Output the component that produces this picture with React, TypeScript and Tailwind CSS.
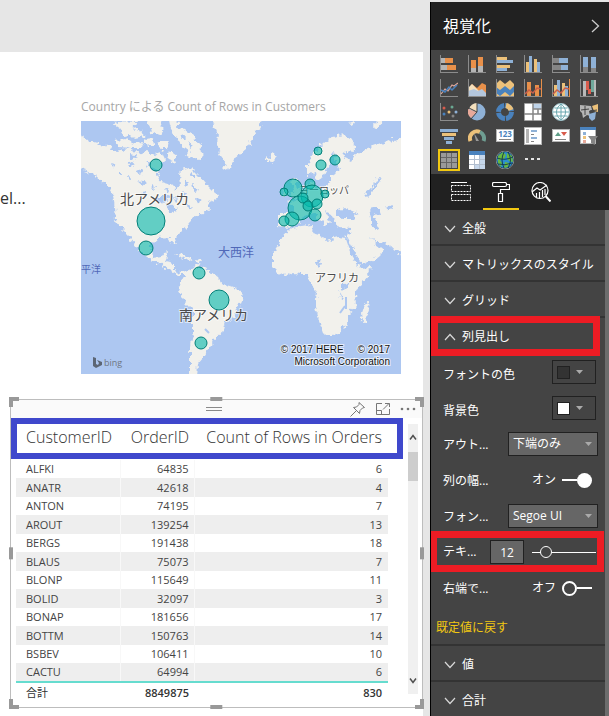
import React, { useState } from "react";

const LATIN = "font-['Open_Sans','Noto_Sans_CJK_JP',sans-serif]";

const ORDERS: [string, number, number][] = [
  ["ALFKI", 64835, 6],
  ["ANATR", 42618, 4],
  ["ANTON", 74195, 7],
  ["AROUT", 139254, 13],
  ["BERGS", 191438, 18],
  ["BLAUS", 75073, 7],
  ["BLONP", 115649, 11],
  ["BOLID", 32097, 3],
  ["BONAP", 181656, 17],
  ["BOTTM", 150763, 14],
  ["BSBEV", 106411, 10],
  ["CACTU", 64994, 6],
];

const BUBBLES: [number, number, number][] = [
  [75, 44, 6], [70, 100, 14], [65, 127, 7], [118, 152, 6], [138, 179, 10], [120, 222, 6],
  [237, 30, 4], [254, 39, 5], [240, 44, 5], [212, 67, 9], [203, 71, 4], [229, 63, 5],
  [231, 75, 11], [219, 87, 12], [244, 73, 4], [222, 77, 5], [227, 85, 5], [236, 83, 5],
  [234, 94, 6], [211, 98, 7], [203, 100, 5],
];

/* ---------- Map visual ---------- */

function MapVisual() {
  return (
    <section className="w-[320px] shrink-0">
      <h2 className="h-[22px] whitespace-nowrap text-[12px] leading-[16px] text-[#a6a6a6]">
        Country による Count of Rows in Customers
      </h2>
      <svg viewBox="0 0 320 253" className="block h-[253px] w-full" role="img" aria-label="Customers by country">
        <defs>
          <filter id="coast" x="-5%" y="-5%" width="110%" height="110%">
            <feTurbulence type="fractalNoise" baseFrequency="0.22" numOctaves="2" seed="4" result="n" />
            <feDisplacementMap in="SourceGraphic" in2="n" scale="8" xChannelSelector="R" yChannelSelector="G" />
          </filter>
          <clipPath id="frame"><rect width="320" height="253" /></clipPath>
        </defs>
        <rect width="320" height="253" fill="#adc7f1" />
        <g clipPath="url(#frame)">
          <g filter="url(#coast)" fill="#f2f1ec">
            <path d="M-6 12L10 20L24 24L36 30L48 27L58 33L66 30L74 34L80 30L84 38L80 44L76 54L80 60L90 63L95 69L99 64L98 55L101 48L109 46L116 53L126 64L134 72L137 78L127 82L128 88L121 92L112 97L109 101L104 107L97 114L93 118L95 124L91 122L88 116L78 117L72 120L69 128L73 137L80 136L83 132L88 131L84 140L93 142L93 149L100 152L107 150L111 153L105 154L98 154L86 147L77 142L66 137L59 131L53 122L46 113L40 107L35 99L34 87L32 74L27 66L14 54L6 50L-6 46Z" />
            <path d="M36 0L56 1L52 8L60 10L63 16L54 18L50 14L42 15L40 8L34 4Z" />
            <path d="M32 19L44 18L54 22L62 21L60 27L50 27L38 26Z" />
            <path d="M66 -3H82L78 5L84 9L78 14L70 11Z" />
            <path d="M64 18L72 17L73 25L66 25Z" />
            <path d="M76 20L88 20L86 28L80 28Z" />
            <path d="M88 -3L98 1L96 7L104 8L112 14L118 22L122 32L119 39L112 38L104 34L108 30L100 24L96 17L92 14L90 7Z" />
            <path d="M89 29L96 34L94 42L87 39Z" />
            <path d="M129 -4L134 5L137 13L136 24L141 37L146 49L151 46L154 37L164 29L170 20L177 10L184 -4Z" />
            <path d="M184 35L188 37L191 32L196 36L191 41L186 40Z" />
            <path d="M111 147L117 144L127 149L137 156L142 164L152 167L162 172L160 179L157 186L153 197L144 202L141 212L132 217L131 224L126 229L122 236L117 242L116 256H109L109 231L112 211L112 189L104 181L97 169L102 157L107 150Z" />
            <path d="M95 133L103 134L112 138L108 139L100 136ZM114 139L120 140L118 143Z" />
            <path d="M202 114L197 124L192 132L192 146L197 151L204 155L212 152L219 153L227 153L230 162L236 172L234 186L239 201L244 215L250 215L258 212L266 202L267 193L275 186L274 172L281 161L287 154L291 146L279 147L272 137L268 126L265 117L257 116L246 119L238 114L231 112L232 104L220 105L209 108Z" />
            <path d="M198 92L213 92L213 86L207 82L216 78L226 68L228 60L234 61L234 68L244 67L250 60L250 54L259 49L256 42L262 36L270 40L274 34L286 28L300 23L308 20L326 16V136L312 127L303 121L295 121L288 114L295 123L304 130L294 138L281 144L274 131L267 117L270 107L258 106L252 98L249 92L244 90L249 100L245 105L239 99L233 92L222 95L216 103L208 107L198 105Z" />
            <path d="M226 44L230 36L236 28L243 21L251 15L262 13L269 18L274 24L272 31L265 30L263 36L260 40L253 40L256 31L251 34L248 44L244 51L241 57L235 59L234 52L226 54Z" />
            <path d="M210 60L216 56L216 64L222 74L216 77L209 76L213 70ZM202 69L207 67L207 74L201 75Z" />
            <path d="M298 -4L302 0L295 8L293 4ZM268 2L274 0L272 4Z" />
            <path d="M287 180L283 186L281 192L282 201L285 200L288 190Z" />
          </g>
          <g filter="url(#coast)" fill="#adc7f1">
            <path d="M256 90L264 87L276 92L274 98L262 98L256 96ZM288 88L297 86L299 92L292 95L298 104L296 109L290 104L290 97ZM304 86L312 84L309 90Z" />
            <path d="M74 78L84 74L90 76L82 82ZM84 83L92 84L96 90L90 92L87 88Z" />
            <path d="M46 44L52 40L54 44L49 47ZM56 60L66 62L62 65ZM37 50L42 53L38 55ZM60 71L66 70L65 75Z" />
            <path d="M48 33L56 34L54 38L48 37ZM100 70L107 72L104 77ZM111 62L117 69L113 71ZM115 77L122 80L116 84Z" />
            <path d="M64 40L70 42L67 46ZM56 50L60 48L62 53L57 54ZM46 56L51 57L48 61ZM70 64L74 66L71 69ZM84 66L89 69L85 71ZM30 42L34 43L33 47ZM112 50L114 57L109 57ZM104 58L108 61L104 65ZM92 76L99 78L95 82ZM106 84L111 86L107 90ZM102 12L106 17L101 19ZM108 20L112 25L109 27Z" />
            <path d="M262 163L268 161L267 167L262 169ZM259 170L262 178L260 179ZM234 142L240 138L238 146Z" />
            <path d="M298 55L301 57L292 70L286 76L283 74L291 67Z" />
          </g>
          <path d="M20 18V22M70 47L76 50M262 32L268 36M265 176V188M259 192L264 185M124 208L128 212" fill="none" stroke="#adc7f1" strokeWidth="2" />
          <g fontFamily="'Noto Sans CJK JP', sans-serif" fill="#4b4b4b" stroke="#ffffff" strokeOpacity="0.6" strokeWidth="2" paintOrder="stroke">
            <text x="39" y="83" fontSize="14">北アメリカ</text>
            <text x="98" y="199" fontSize="14">南アメリカ</text>
            <text x="234" y="161" fontSize="11">アフリカ</text>
            <text x="218" y="73" fontSize="10">ヨーロッパ</text>
          </g>
          <g fontFamily="'Noto Sans CJK JP', sans-serif" fill="#5068b8">
            <text x="137" y="136" fontSize="12">大西洋</text>
            <text x="0" y="152" fontSize="10">平洋</text>
          </g>
          <g fill="#01b8aa" fillOpacity="0.6" stroke="#027f78" strokeWidth="1">
            {BUBBLES.map(([x, y, r]) => (
              <circle key={`${x}-${y}`} cx={x} cy={y} r={r} />
            ))}
          </g>
          <path d="M12 236L15 237V243L17 244L18 242L16 239L21 241V244L15 247L12 245Z" fill="#5c6675" />
          <text x="23" y="245" fontFamily="'Open Sans', sans-serif" fontSize="9" fill="#6d7683">bing</text>
          <g fontFamily="'Liberation Sans', Arial, sans-serif" fontSize="10" fill="#111111" stroke="#ffffff" strokeOpacity="0.7" strokeWidth="2" paintOrder="stroke" textAnchor="end">
            <text x="309" y="232">{"© 2017 HERE \u00a0\u00a0\u00a0 © 2017"}</text>
            <text x="309" y="244">Microsoft Corporation</text>
          </g>
        </g>
      </svg>
    </section>
  );
}

/* ---------- Table visual ---------- */

function SelectionHandles() {
  return (
    <svg className="pointer-events-none absolute -inset-px h-[calc(100%+2px)] w-[calc(100%+2px)] overflow-visible" aria-hidden="true">
      <g fill="#999999">
        <path d="M-1 -2H9V2H3V8H-1Z" />
        <rect x="48.5%" y="-2" width="12" height="4" />
        <rect x="-1" y="48%" width="4" height="12" />
        <svg x="100%" overflow="visible"><path d="M1 -2H-8V2H-3V8H1Z" /></svg>
        <svg x="100%" y="48%" overflow="visible"><rect x="-3" width="4" height="12" /></svg>
        <svg y="100%" overflow="visible"><path d="M-1 1H9V-3H3V-9H-1Z" /></svg>
        <svg x="48.5%" y="100%" overflow="visible"><rect y="-3" width="12" height="4" /></svg>
        <svg x="100%" y="100%" overflow="visible"><path d="M1 1H-8V-3H-3V-9H1Z" /></svg>
      </g>
    </svg>
  );
}

function TableVisual() {
  return (
    <section className="relative ml-[10px] border border-[#bdbdbd]">
      <div className="flex h-[18px] items-center bg-[#fafafa]">
        <span className="flex-1" />
        <span className="h-1 w-4 border-y border-[#8a8a8a]" />
        <div className="flex flex-1 items-center justify-end gap-[9px] pr-[6px]">
          <button aria-label="Pin visual">
            <svg width="17" height="17" viewBox="0 0 17 17" fill="none" stroke="#777777" strokeWidth="1">
              <path d="M10 1.5L15.500 6.500L13.500 7L11 9.500L10.500 12.500L4.500 6.500L7.500 6L10 3.500ZM7.500 9.500L1.500 15.500" />
            </svg>
          </button>
          <button aria-label="Focus mode">
            <svg width="16" height="14" viewBox="0 0 16 14" fill="none" stroke="#777777" strokeWidth="1">
              <path d="M7 1.500H1.500V12.500H14.500V7M1.500 8.500H6.500V12.500M8 7.500L14 1.500M10 1.500H14.500V5" />
            </svg>
          </button>
          <button aria-label="More options">
            <svg width="16" height="4" viewBox="0 0 16 4" fill="#777777">
              <circle cx="2" cy="2" r="1.300" /><circle cx="8" cy="2" r="1.300" /><circle cx="14" cy="2" r="1.300" />
            </svg>
          </button>
        </div>
      </div>
      <div className="flex justify-between pb-[5px] pl-[5px] pr-1">
        <table className="w-[372px] table-fixed border-collapse text-[11px] text-[#444444]">
          <colgroup>
            <col className="w-[104px]" />
            <col className="w-[74px]" />
            <col />
          </colgroup>
          <thead>
            <tr className="h-[42px] whitespace-nowrap text-[16px] leading-[20px] text-[#333333]">
              <th className="p-0 pb-1 pl-[10px] text-left font-light">CustomerID</th>
              <th className="p-0 pb-1 pr-[5px] text-right font-light">OrderID</th>
              <th className="p-0 pb-1 pr-[6px] text-right font-light">Count of Rows in Orders</th>
            </tr>
          </thead>
          <tbody className="leading-[16px]">
            {ORDERS.map(([id, order, count]) => (
              <tr key={id} className="h-[18px] even:h-[19px] even:bg-[#eeeeee]">
                <td className="border-r border-[#f8f8f8] p-0 pl-[10px]">{id}</td>
                <td className="border-r border-[#f8f8f8] p-0 pr-[5px] text-right">{order}</td>
                <td className="p-0 pr-[6px] text-right">{count}</td>
              </tr>
            ))}
          </tbody>
          <tfoot>
            <tr className="h-[20px] border-t-2 border-[#66dccf] font-semibold leading-[16px] text-[#333333]">
              <td className="p-0 pl-[10px] font-normal">合計</td>
              <td className="p-0 pr-[5px] text-right">8849875</td>
              <td className="p-0 pr-[6px] text-right">830</td>
            </tr>
          </tfoot>
        </table>
        <div className="mb-2 mt-[6px] flex w-[10px] flex-col items-center bg-[#f0f0f0]">
          <svg width="8" height="28" viewBox="0 0 8 28" fill="none" stroke="#505050" strokeWidth="1.500"><path d="M1 15.500L4 11.500L7 15.500" /></svg>
          <span className="h-[29px] w-full bg-[#cdcdcd]" />
          <span className="flex-1" />
          <svg width="8" height="28" viewBox="0 0 8 28" fill="none" stroke="#505050" strokeWidth="1.500"><path d="M1 12.500L4 16.500L7 12.500" /></svg>
        </div>
      </div>
      <span className="pointer-events-none absolute left-0 right-[19px] top-[18px] h-[41px] border-[6px] border-[#3f48cc]" />
      <SelectionHandles />
    </section>
  );
}

/* ---------- Visualization icons (18 x 18) ---------- */

const O = "#e8904a";
const Y = "#ecc17a";
const B = "#8fb1d6";
const D = "#4a82bd";
const G = "#b5b5b5";
const K = "#858585";
const AXIS = <path d="M0 0H1V17H18V18H0Z" fill="#8c8c8c" />;

function Bars({ list }: { list: [number, number, number, number, string][] }) {
  return (
    <>
      {AXIS}
      {list.map(([x, y, w, h, c], i) => (
        <rect key={i} x={x} y={y} width={w} height={h} fill={c} />
      ))}
    </>
  );
}

const ICONS: [string, React.ReactNode][] = [
  ["Stacked bar chart", <Bars list={[[1, 3, 4, 5, G], [5, 3, 8, 5, O], [1, 10, 6, 5, G], [7, 10, 9, 5, O]]} />],
  ["Stacked column chart", <Bars list={[[3, 5, 5, 8, O], [3, 13, 5, 4, G], [10, 2, 5, 9, O], [10, 11, 5, 6, G]]} />],
  ["Clustered bar chart", <Bars list={[[1, 2, 10, 3, Y], [1, 5, 16, 3, B], [1, 10, 13, 3, Y], [1, 13, 10, 3, B]]} />],
  ["Clustered column chart", <Bars list={[[2, 7, 3, 10, Y], [5, 1, 3, 16, B], [10, 4, 3, 13, Y], [13, 7, 3, 10, B]]} />],
  ["100% stacked bar chart", <Bars list={[[1, 3, 6, 5, K], [7, 3, 9, 5, B], [1, 10, 8, 5, K], [9, 10, 7, 5, B]]} />],
  ["100% stacked column chart", <Bars list={[[3, 2, 5, 10, B], [3, 12, 5, 5, K], [11, 2, 5, 11, B], [11, 13, 5, 4, K]]} />],

  ["Line chart", <>{AXIS}<path d="M1 15L5 10L8 12L12 6L14 7L18 4" fill="none" stroke="#e0a79a" strokeWidth="1.200" /><path d="M1 11L5 13L9 8L12 11L17 6" fill="none" stroke={D} strokeWidth="1.500" /></>],
  ["Area chart", <><path d="M0 10L4 5L9 9L14 4L18 6V17H0Z" fill={O} /><path d="M0 9L4 5L12 13L18 16V17H0Z" fill="#f3dfbd" /><path d="M0 12L6 10L10 12L14 10L18 14V17H0Z" fill="#b3c6dc" />{AXIS}</>],
  ["Stacked area chart", <><path d="M0 5L4 1L9 5L14 1L18 5V12H0Z" fill={Y} /><path d="M0 8L4 11L9 7L14 11L18 7V17H0Z" fill={D} /><path d="M0 14L4 17L9 13L14 17L18 13V17H0Z" fill={Y} />{AXIS}</>],
  ["Line and stacked column chart", <><Bars list={[[3, 3, 4, 14, O], [11, 6, 4, 11, O], [17, 0, 1, 18, O]]} /><path d="M1 15L5 11L9 14L13 9L17 10" fill="none" stroke="#c95f4b" strokeWidth="1.500" /></>],
  ["Line and clustered column chart", <><Bars list={[[2, 6, 3, 11, Y], [5, 1, 3, 16, B], [10, 4, 3, 13, Y], [13, 7, 3, 10, B], [17, 0, 1, 18, O]]} /><path d="M1 15L5 11L9 14L13 9L17 10" fill="none" stroke="#c95f4b" strokeWidth="1.500" /></>],
  ["Waterfall chart", <Bars list={[[3, 2, 3, 15, "#b9b9b9"], [6, 2, 3, 9, "#d85b4c"], [8, 10, 3, 5, "#d85b4c"], [11, 1, 3, 12, "#70a99c"], [14, 1, 2, 16, "#b9b9b9"]]} />],

  ["Scatter chart", <>{AXIS}<circle cx="4" cy="5" r="1.500" fill="#d85b4c" /><circle cx="12" cy="4" r="1.500" fill="#6aa892" /><circle cx="4" cy="11" r="1.500" fill={D} /><circle cx="9" cy="9" r="1.500" fill={Y} /><circle cx="16" cy="9" r="1.500" fill={B} /><circle cx="13" cy="13" r="1.500" fill={K} /></>],
  ["Pie chart", <><circle cx="9" cy="9" r="8.500" fill={B} /><path d="M9 9V0A9 9 0 0 0 1 6Z" fill="#f3dfbd" /><path d="M9 9L0 6A9 9 0 0 0 3 15Z" fill="#e8a99a" /><path d="M9 0V9L1 5M9 9L3 16" fill="none" stroke="#444444" /></>],
  ["Donut chart", <><circle cx="9" cy="9" r="6.500" fill="none" stroke={D} strokeWidth="5" strokeDasharray="9 1" /><path d="M10 2.500A6.500 6.500 0 0 1 15 7" fill="none" stroke={Y} strokeWidth="5" /></>],
  ["Treemap", <><rect width="18" height="18" fill="#fff" /><path d="M9 1H17V6H9Z" fill="#bdd2e8" /><path d="M0 0H18V18H0ZM9 0V11M0 11H18M9 6H18M14 6V11M9 11V18" fill="none" stroke={K} strokeWidth="1.500" /></>],
  ["Map", <><circle cx="9" cy="9" r="8.500" fill="#fff" stroke="#9fc4cc" /><path d="M9 1V17M1 9H17M2.500 5H15.500M2.500 13H15.500M9 1C3 5 3 13 9 17M9 1C15 5 15 13 9 17" fill="none" stroke="#6aa8b0" /></>],
  ["Filled map", <><path d="M0 2L11 3L12 7L9 8L10 13L7 12L3 15L2 10L0 8Z" fill={G} /><path d="M12 3L18 1V9L14 8Z" fill={Y} /><path d="M9 11L16 9L15 16L12 18L9 15Z" fill={B} /><path d="M1 7L9 6M5 3V12M10 8L17 7" stroke="#444" fill="none" /></>],

  ["Funnel", <><rect y="2" width="18" height="3" fill={B} /><rect x="2" y="6" width="14" height="3" fill={Y} /><rect x="4" y="10" width="10" height="3" fill={B} /><rect x="6" y="14" width="6" height="3" fill={B} /></>],
  ["Gauge", <><path d="M2.500 14A7 7 0 0 1 12 5" fill="none" stroke={Y} strokeWidth="4" /><path d="M12 5A7 7 0 0 1 15.500 14" fill="none" stroke="#6f9e92" strokeWidth="4" /><path d="M11 14L6 6L8 14Z" fill="#999" /></>],
  ["Card", <><rect x=".5" y="2.500" width="17" height="12" fill="#fff" stroke={G} /><text x="9" y="10" fontSize="8" fontWeight="700" fontFamily="'Open Sans', sans-serif" textAnchor="middle" fill={D}>123</text><path d="M3 12.500H15" stroke={K} /></>],
  ["Multi-row card", <><rect x=".5" y=".5" width="17" height="17" fill="#fff" stroke={G} /><rect x="2" y="2" width="3" height="14" fill={G} /><path d="M7 3H13V5H7ZM7 10H13V12H7Z" fill={B} /><path d="M7 7.500H10M7 14.500H10" stroke={K} /></>],
  ["KPI", <><rect x=".5" y="2.500" width="17" height="12" fill="#fff" stroke={G} /><path d="M3 9L6 5L9 9Z" fill="#5f9e88" /><path d="M9 5H15L12 9Z" fill="#d85b4c" /><path d="M3 12.500H14" stroke={K} /></>],
  ["Slicer", <><rect x=".5" y=".5" width="15" height="16" fill="#fff" stroke={G} /><rect width="16" height="3" fill={D} /><rect x="3" y="5" width="3" height="3" fill={B} /><rect x="3" y="9" width="3" height="3" fill={Y} /><rect x="3" y="13" width="3" height="3" fill="#e8a99a" /><path d="M8 9H18L15 13V18L11 16V13Z" fill={K} /></>],

  ["Table", <><rect width="18" height="18" fill="#444" /><path d="M1 2H17V17H1Z" fill="#9a9a9a" /><path d="M1 6.500H17M1 11.500H17M6.500 2V17M11.500 2V17" stroke="#666" fill="none" /></>],
  ["Matrix", <><rect x="1" width="16" height="18" fill="#fff" /><rect x="1" width="16" height="4" fill={D} /><path d="M12 4H17V18H6V13H12Z" fill="#c6d7eb" /><path d="M1 8.500H17M1 13.500H17M6.500 4V18M11.500 4V18" stroke="#b3bfcf" fill="none" /></>],
  ["ArcGIS map", <><circle cx="9" cy="9" r="9" fill="#12384c" stroke="#aaa" strokeWidth=".7" /><circle cx="9" cy="9" r="8" fill="#2b8fd0" /><path d="M2 5L7 1L10 4L8 8L4 9L6 12L5 16L2 12ZM11 2L16 5L17 11L13 10L11 7ZM9 11L13 12L12 16L8 17Z" fill="#67b742" /><path d="M1 7Q9 10 17 6M2 13Q9 15 16 12M8 1Q4 9 8 17M12 1Q17 9 12 17" fill="none" stroke="#12384c" strokeWidth=".9" /></>],
  ["More visuals", <><rect y="7" width="3" height="2" fill="#e5e5e5" x="1" /><rect x="7" y="7" width="3" height="2" fill="#e5e5e5" /><rect x="13" y="7" width="3" height="2" fill="#e5e5e5" /></>],
];

/* ---------- Side pane ---------- */

function Chevron({ up = false }: { up?: boolean }) {
  return (
    <svg width="12" height="8" viewBox="0 0 12 8" fill="none" stroke="#d8d8d8" strokeWidth="1.200">
      <path d={up ? "M1 7L6 1.500L11 7" : "M1 1L6 6.500L11 1"} />
    </svg>
  );
}

function Section({ title, open = false, marked = false }: { title: string; open?: boolean; marked?: boolean }) {
  return (
    <div className="relative">
      <button
        aria-expanded={open}
        className={
          open
            ? "flex h-9 w-full items-center gap-[6px] whitespace-nowrap pl-[13px] pt-px text-[12px] text-white"
            : "flex h-9 w-full items-center gap-[6px] whitespace-nowrap border-b-2 border-[#333333] pl-[13px] pt-[3px] text-[12px] text-white"
        }
      >
        <Chevron up={open} />
        {title}
      </button>
      {marked && <span className="pointer-events-none absolute -top-[2px] left-0 right-[5px] h-[40px] border-[7px] border-[#ed1c24]" />}
    </div>
  );
}

function Caret() {
  return <svg width="7" height="4" viewBox="0 0 7 4" fill="#aaaaaa"><path d="M0 0H7L3.500 4Z" /></svg>;
}

function Row({ id, label, low = false, children }: { id: string; label: string; low?: boolean; children: React.ReactNode }) {
  return (
    <div className="flex h-9 items-center justify-between pl-3 pr-[7px] text-[12px] text-white">
      <label htmlFor={id} className={low ? "whitespace-nowrap pt-[6px]" : "whitespace-nowrap pt-px"}>{label}</label>
      {children}
    </div>
  );
}

function ColorButton({ id, white = false }: { id: string; white?: boolean }) {
  return (
    <button id={id} className="mr-[2px] flex h-6 w-11 items-center gap-[6px] border border-[#212121] pl-1">
      <span className={white ? "size-[13px] border border-[#212121] bg-white" : "size-[13px] border border-[#212121] bg-[#333333]"} />
      <Caret />
    </button>
  );
}

function Select({ id, value }: { id: string; value: string }) {
  return (
    <span className="relative flex h-6 w-[90px] items-center">
      <select id={id} className="h-6 w-full appearance-none border border-[#212121] bg-[#666666] pl-1 text-[12px] leading-[20px] text-white" defaultValue={value}>
        <option>{value}</option>
      </select>
      <span className="pointer-events-none absolute right-[6px]"><Caret /></span>
    </span>
  );
}

function Toggle({ id, initial }: { id: string; initial: boolean }) {
  const [on, setOn] = useState(initial);
  return (
    <span className="relative mr-[6px] flex items-center gap-[6px]">
      {on ? "オン" : "オフ"}
      <span className={on ? "flex h-4 w-[30px] items-center" : "flex h-4 w-[30px] flex-row-reverse items-center"}>
        <span className="h-[2px] flex-1 bg-white" />
        <span className={on ? "size-[15px] rounded-full bg-white" : "size-[15px] rounded-full border-2 border-white"} />
      </span>
      <input id={id} type="checkbox" checked={on} onChange={() => setOn(!on)} className="absolute inset-0 size-full opacity-0" />
    </span>
  );
}

function SidePane() {
  return (
    <aside className="mt-[2px] w-[179px] shrink-0 overflow-hidden border-l border-black bg-[#444444]">
      <header className="flex h-12 items-center justify-between bg-[#212121] pl-3 pr-[9px]">
        <h1 className="text-[16px] leading-[24px] text-white">視覚化</h1>
        <button aria-label="Collapse pane">
          <svg width="9" height="14" viewBox="0 0 9 14" fill="none" stroke="#cccccc" strokeWidth="1.300"><path d="M1 1L7.500 7L1 13" /></svg>
        </button>
      </header>
      <div className="grid h-[124px] grid-cols-[repeat(6,28px)] auto-rows-[24px] pl-1 pt-[2px]">
        {ICONS.map(([name, art]) => (
          <button
            key={name}
            aria-label={name}
            className={
              name === "Table"
                ? "mx-[3px] my-px flex items-center justify-center border-2 border-[#f2c811] bg-[#333333]"
                : "flex items-center justify-center"
            }
          >
            <svg width="18" height="18" viewBox="0 0 18 18">{art}</svg>
          </button>
        ))}
      </div>
      <nav className="flex h-9 bg-[#212121] pl-[10px]">
        <button aria-label="Fields" className="flex w-10 items-center justify-center">
          <svg width="20" height="20" viewBox="0 0 20 20" fill="none" stroke="#ffffff"><path d="M0 .5H16" /><path d="M.5 3.500H19.500V9.500H.5ZM.5 12.500H19.500V18.500H.5Z" strokeDasharray="2 1" /></svg>
        </button>
        <button aria-label="Format" className="relative flex w-10 items-center justify-center">
          <svg width="18" height="20" viewBox="0 0 18 20" fill="none" stroke="#ffffff" strokeWidth="1.200"><path d="M.5 1.500Q.5 .5 2 .5H13Q14.500 .5 14.500 2V3Q14.500 4.500 13 4.500H2Q.5 4.500 .5 3ZM14.500 2.500H17.500V7.500H8.500V11M6.500 11.500H10.500V19.500H6.500Z" /></svg>
          <span className="absolute bottom-0 left-[2px] right-[2px] h-[2px] bg-[#f2c811]" />
        </button>
        <button aria-label="Analytics" className="flex w-10 items-center justify-center">
          <svg width="20" height="20" viewBox="0 0 20 20" fill="none" stroke="#ffffff" strokeWidth="1.200"><circle cx="9" cy="8.500" r="8" /><path d="M14.500 14L19.500 19.500" strokeWidth="2" /><path d="M1 10L6 6L9 8L16 3M5.500 11V15M8.500 10V16M11.500 8V15M14 7V13" /></svg>
        </button>
      </nav>
      <div className="border-r-4 border-[#6d6d6d] bg-[#444444]">
        <Section title="全般" />
        <Section title="マトリックスのスタイル" />
        <Section title="グリッド" />
        <Section title="列見出し" open marked />
        <Row id="font-color" label="フォントの色" low><ColorButton id="font-color" /></Row>
        <Row id="back-color" label="背景色" low><ColorButton id="back-color" white /></Row>
        <Row id="outline" label="アウト..."><Select id="outline" value="下端のみ" /></Row>
        <Row id="auto-width" label="列の幅..."><Toggle id="auto-width" initial /></Row>
        <Row id="font-family" label="フォン..."><Select id="font-family" value="Segoe UI" /></Row>
        <div className="relative flex h-9 items-center pl-3 pr-[7px] text-[12px] text-white">
          <label htmlFor="text-size" className="w-[47px] whitespace-nowrap">テキ...</label>
          <input id="text-size" defaultValue="12" className="h-6 w-[34px] border border-[#212121] bg-[#666666] text-center" />
          <input
            type="range"
            aria-label="テキスト サイズ"
            min="8"
            max="40"
            defaultValue="13"
            className="ml-2 h-3 w-16 appearance-none bg-[linear-gradient(#fff,#fff)] bg-[length:100%_1px] bg-center bg-no-repeat [&::-webkit-slider-thumb]:size-3 [&::-webkit-slider-thumb]:appearance-none [&::-webkit-slider-thumb]:rounded-full [&::-webkit-slider-thumb]:border [&::-webkit-slider-thumb]:border-white [&::-webkit-slider-thumb]:bg-[#444444]"
          />
          <span className="pointer-events-none absolute -left-px -top-[3px] right-px h-[41px] border-[7px] border-[#ed1c24]" />
        </div>
        <Row id="total-right" label="右端で..."><Toggle id="total-right" initial={false} /></Row>
        <div className="flex h-10 items-center border-b-2 border-[#333333] pl-[5px] pt-[6px]">
          <button className="text-[12px] text-[#f2c811]">既定値に戻す</button>
        </div>
        <Section title="値" />
        <Section title="合計" />
      </div>
    </aside>
  );
}

export default function App() {
  return (
    <div className={`flex h-screen overflow-hidden bg-[#e6e6e6] ${LATIN}`}>
      <main className="mr-[7px] mt-[52px] flex min-w-0 flex-1 flex-col bg-white">
        <div className="flex h-[347px] shrink-0 pt-[47px]">
          <p className="w-[81px] shrink-0 pt-[87px] text-[16px] leading-[24px] text-[#333333]">el...</p>
          <MapVisual />
        </div>
        <TableVisual />
      </main>
      <SidePane />
    </div>
  );
}
